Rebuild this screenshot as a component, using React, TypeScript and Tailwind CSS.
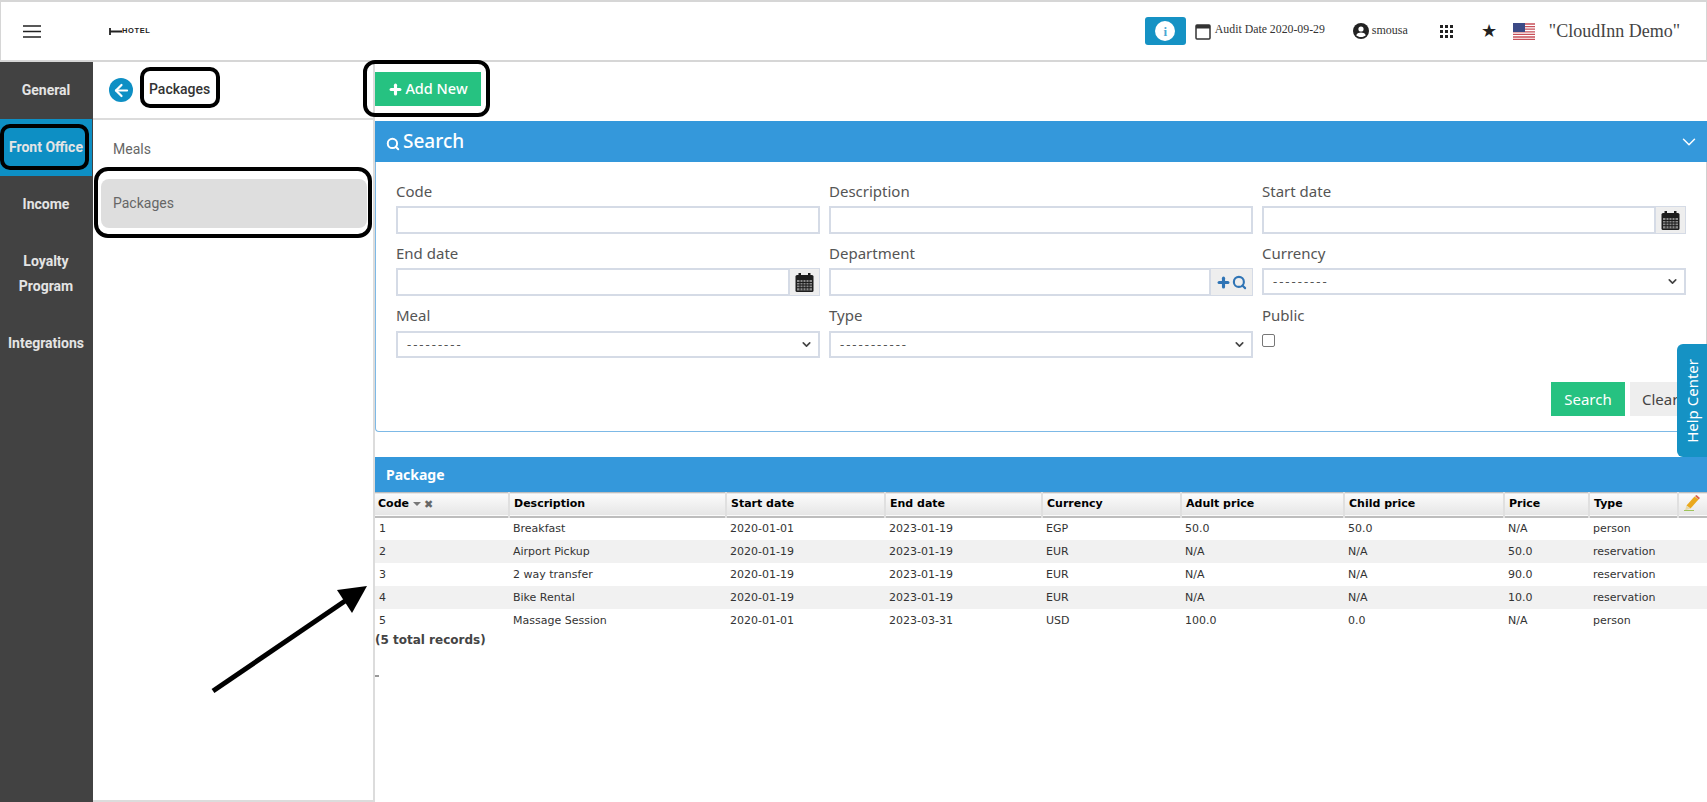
import { Info, Plus, Search, ChevronDown, ArrowLeft } from "lucide-react";

const sideItems = [
  { label: "General", cls: "h-[57px]" },
  { label: "Front Office", cls: "h-[57px] bg-[#0d8fc4]" },
  { label: "Income", cls: "h-[57px]" },
  { label: "Loyalty Program", cls: "h-[82px] px-3" },
  { label: "Integrations", cls: "h-[56px]" },
];

const columns = [
  { label: "Description", w: "w-[217px]" },
  { label: "Start date", w: "w-[159px]" },
  { label: "End date", w: "w-[157px]" },
  { label: "Currency", w: "w-[139px]" },
  { label: "Adult price", w: "w-[163px]" },
  { label: "Child price", w: "w-[160px]" },
  { label: "Price", w: "w-[85px]" },
  { label: "Type", w: "w-[89px]" },
];

const rows = [
  ["1", "Breakfast", "2020-01-01", "2023-01-19", "EGP", "50.0", "50.0", "N/A", "person"],
  ["2", "Airport Pickup", "2020-01-19", "2023-01-19", "EUR", "N/A", "N/A", "50.0", "reservation"],
  ["3", "2 way transfer", "2020-01-19", "2023-01-19", "EUR", "N/A", "N/A", "90.0", "reservation"],
  ["4", "Bike Rental", "2020-01-19", "2023-01-19", "EUR", "N/A", "N/A", "10.0", "reservation"],
  ["5", "Massage Session", "2020-01-01", "2023-03-31", "USD", "100.0", "0.0", "N/A", "person"],
];

function CalendarSolid() {
  return (
    <svg width="19" height="19" viewBox="0 0 18 19">
      <rect x="0" y="2" width="18" height="17" rx="1.5" fill="#1d1d1d" />
      <rect x="3" y="0" width="2.5" height="4" fill="#1d1d1d" />
      <rect x="12.5" y="0" width="2.5" height="4" fill="#1d1d1d" />
      <rect x="1.5" y="7" width="15" height="10.5" fill="#8a8a8a" />
      <path d="M1.5 9.5h15M1.5 12h15M1.5 14.7h15M4.5 7v10.5M7.5 7v10.5M10.5 7v10.5M13.5 7v10.5" stroke="#1d1d1d" strokeWidth="1" />
    </svg>
  );
}

function UsFlag() {
  return (
    <svg width="22" height="17" viewBox="0 0 22 17">
      <rect width="22" height="17" fill="#fff" />
      <path d="M0 1h22M0 3.6h22M0 6.2h22M0 8.8h22M0 11.4h22M0 14h22M0 16.3h22" stroke="#c8505a" strokeWidth="1.3" />
      <rect width="12" height="9" fill="#3c4a86" />
    </svg>
  );
}

function Pencil() {
  return (
    <svg width="16" height="16" viewBox="0 0 16 16">
      <path d="M10.5 1.5l4 3-8 9-4-3z" fill="#eaa81c" />
      <path d="M11 1l1.5-1 3.5 3-1.5 1.5z" fill="#d9634c" />
      <path d="M2.5 10.5l4 3-5.5 2z" fill="#e8d9a8" />
      <path d="M0 15.5h10" stroke="#9fc45a" strokeWidth="1" />
    </svg>
  );
}

function Field({ label, children }: { label: string; children: React.ReactNode }) {
  return (
    <div className="h-[62px]">
      <div className="h-[24px] text-[15px] leading-[18px] text-[#555] font-['Noto_Sans',sans-serif]">{label}</div>
      {children}
    </div>
  );
}

function TextInput() {
  return <div className="h-[28px] border-2 border-[#d5dbe6] bg-white" />;
}

function AddonInput({ children }: { children: React.ReactNode }) {
  return (
    <div className="h-[28px] flex border-2 border-[#d5dbe6] bg-white">
      <div className="flex-1" />
      <div className="w-[31px] -my-[1px] -mr-[1px] border-l-2 border-[#d5dbe6] bg-[#eeeeee] flex items-center justify-center">{children}</div>
    </div>
  );
}

function SelectBox({ value, top }: { value: string; top?: boolean }) {
  return (
    <div className={`${top ? "mt-[1px]" : ""} h-[27px] flex items-center justify-between border-2 border-[#d5dbe6] bg-white pl-[9px] pr-[5px] text-[13px] tracking-[2px] text-[#555] font-['Noto_Sans',sans-serif]`}>
      <span>{value}</span>
      <ChevronDown size={13} strokeWidth={3} color="#444" />
    </div>
  );
}

export default function App() {
  return (
    <div className="relative w-[1707px] h-[802px] overflow-hidden bg-white flex flex-col font-['Roboto',sans-serif]">
      {/* Top bar */}
      <header className="h-[62px] shrink-0 flex items-center border-t-2 border-l border-r border-b-2 border-[#d6d6d6] bg-white">
        <svg width="18" height="13" viewBox="0 0 18 13" className="ml-[22px]">
          <path d="M0 1h18M0 6.5h18M0 12h18" stroke="#222" strokeWidth="1.6" />
        </svg>
        <div className="ml-[68px] flex items-center text-[#222]">
          <svg width="13" height="7" viewBox="0 0 13 7">
            <path d="M1 0v7M1 3.5h12" stroke="#222" strokeWidth="1.8" />
          </svg>
          <span className="text-[7.5px] font-bold tracking-[0.6px] font-['Liberation_Sans',sans-serif]">HOTEL</span>
        </div>
        <div className="ml-auto flex items-center font-['Liberation_Serif',serif] text-[#333]">
          <div className="w-[41px] h-[28px] rounded-[3px] bg-[#1592c4] flex items-center justify-center">
            <div className="w-[20px] h-[20px] rounded-full bg-white flex items-center justify-center">
              <Info size={20} color="#1592c4" className="fill-white" strokeWidth={0} />
              <span className="absolute text-[13px] font-bold leading-none text-[#4aa8d4] font-['Liberation_Serif',serif]">i</span>
            </div>
          </div>
          <svg width="16" height="17" viewBox="0 0 16 17" className="ml-[9px]">
            <rect x="1" y="2" width="14" height="14" rx="1" fill="none" stroke="#333" strokeWidth="1.5" />
            <rect x="1" y="2" width="14" height="3.5" fill="#333" />
          </svg>
          <span className="ml-[4px] text-[11.8px] w-[138px] -mt-[3px]">Audit Date 2020-09-29</span>
          <svg width="16" height="16" viewBox="0 0 16 16">
            <circle cx="8" cy="8" r="8" fill="#222" />
            <circle cx="8" cy="6" r="2.6" fill="#fff" />
            <path d="M3.2 12.2c1-2 3-2.6 4.8-2.6s3.8.6 4.8 2.6c-1.2 1.2-2.9 1.8-4.8 1.8s-3.6-.6-4.8-1.8z" fill="#fff" />
          </svg>
          <span className="ml-[3px] text-[12px] w-[68px] -mt-[3px]">smousa</span>
          <svg width="13" height="13" viewBox="0 0 13 13" fill="#222">
            <rect x="0" y="0" width="3" height="3" /><rect x="5" y="0" width="3" height="3" /><rect x="10" y="0" width="3" height="3" />
            <rect x="0" y="5" width="3" height="3" /><rect x="5" y="5" width="3" height="3" /><rect x="10" y="5" width="3" height="3" />
            <rect x="0" y="10" width="3" height="3" /><rect x="5" y="10" width="3" height="3" /><rect x="10" y="10" width="3" height="3" />
          </svg>
          <span className="ml-[28px] text-[18px] leading-none text-[#222]">★</span>
          <span className="ml-[16px] flex"><UsFlag /></span>
          <span className="ml-[14px] mr-[26px] text-[18px] text-[#444] whitespace-nowrap">"CloudInn Demo"</span>
        </div>
      </header>

      <div className="flex flex-1 min-h-0">
        {/* Module rail */}
        <nav className="w-[93px] shrink-0 bg-[#424242] pr-[1px]">
          {sideItems.map((item) => (
            <div
              key={item.label}
              className={`${item.cls} flex items-center justify-center text-center text-[14px] leading-[25px] font-bold text-[#e4e4e4]`}
            >
              {item.label}
            </div>
          ))}
        </nav>

        {/* Sub menu */}
        <aside className="w-[282px] shrink-0 border-r-2 border-b-2 border-[#dcdcdc]">
          <div className="h-[58px] flex items-center pl-[16px] border-b-2 border-[#dcdcdc]">
            <div className="w-[24px] h-[24px] rounded-full bg-[#0d8fc4] flex items-center justify-center">
              <ArrowLeft size={19} strokeWidth={2.8} color="#fff" />
            </div>
            <span className="ml-[16px] -mt-[1px] text-[14px] font-medium text-[#333]">Packages</span>
          </div>
          <div className="pt-[10px] pl-[8px] pr-[6px] text-[14px] text-[#666]">
            <div className="h-[38px] flex items-center pl-[12px]">Meals</div>
            <div className="mt-[11px] h-[49px] rounded-lg bg-[#dedede] flex items-center pl-[12px]">Packages</div>
          </div>
        </aside>

        {/* Main */}
        <main className="flex-1 min-w-0 pt-[10px]">
          <button className="w-[106px] h-[34px] bg-[#26c281] text-white text-[14.5px] font-medium flex items-center justify-center gap-[2px] font-['Noto_Sans',sans-serif]">
            <Plus size={15} strokeWidth={5} />
            <span className="-mt-[1px]">Add New</span>
          </button>

          <section className="mt-[15px]">
            <div className="h-[41px] bg-[#3498db] text-white flex items-center pl-[11px]">
              <Search size={14} strokeWidth={3.4} className="mt-[4px]" />
              <span className="ml-[3px] -mt-[1px] text-[19px] font-medium font-['Noto_Sans',sans-serif]">Search</span>
              <ChevronDown size={22} strokeWidth={1.6} className="ml-auto mr-[7px]" />
            </div>
            <div className="h-[270px] border-l border-r border-b border-l-[#7db9e6] border-b-[#7db9e6] border-r-[#d0d0d0] rounded-bl-sm pl-[20px]">
              <div className="pt-[20px] grid grid-cols-[424px_424px_424px] gap-x-[9px]">
                <Field label="Code"><TextInput /></Field>
                <Field label="Description"><TextInput /></Field>
                <Field label="Start date"><AddonInput><CalendarSolid /></AddonInput></Field>
                <Field label="End date"><AddonInput><CalendarSolid /></AddonInput></Field>
                <Field label="Department">
                  <div className="h-[28px] flex border-2 border-[#d5dbe6] bg-white">
                    <div className="flex-1" />
                    <div className="w-[43px] -my-[1px] -mr-[1px] border-l-2 border-[#d5dbe6] bg-[#eeeeee] flex items-center justify-center gap-[1px]">
                      <Plus size={15} strokeWidth={5} color="#2f74b5" />
                      <Search size={15} strokeWidth={3.4} color="#2f74b5" />
                    </div>
                  </div>
                </Field>
                <Field label="Currency"><SelectBox value="---------" /></Field>
                <Field label="Meal"><SelectBox value="---------" top /></Field>
                <Field label="Type"><SelectBox value="-----------" top /></Field>
                <Field label="Public">
                  <div className="mt-[4px] w-[13px] h-[13px] rounded-[2px] border border-[#777] bg-white" />
                </Field>
              </div>
              <div className="mt-[14px] flex justify-end gap-[5px] pr-[16px] text-[15px] font-['Noto_Sans',sans-serif]">
                <div className="w-[74px] h-[34px] bg-[#26c281] text-white flex items-center justify-center">Search</div>
                <div className="w-[60px] h-[34px] bg-[#eeeeee] text-[#444] flex items-center pl-[12px]">Clear</div>
              </div>
            </div>
          </section>

          <section className="mt-[25px] font-['DejaVu_Sans',sans-serif]">
            <div className="h-[35px] bg-[#3498db] text-white flex items-center pl-[11px] text-[14px] font-bold font-['Noto_Sans',sans-serif]">
              <span className="-mt-[1px]">Package</span>
            </div>
            <table className="w-full table-fixed border-collapse text-[11px] text-[#333]">
              <thead>
                <tr className="h-[24px] bg-gradient-to-b from-[#fbfbfb] to-[#e6e6e6] border-t border-b-2 border-[#bdbdbd] text-black">
                  <th className="w-[134px] px-[3px] text-left font-bold border-r-2 border-[#e0e0e0]">
                    <span className="inline-flex items-center gap-[4px]">
                      Code
                      <span className="w-0 h-0 border-l-[4px] border-r-[4px] border-t-[4px] border-l-transparent border-r-transparent border-t-[#777]" />
                      <span className="-ml-[1px] text-[#666] text-[11px] leading-none">✖</span>
                    </span>
                  </th>
                  {columns.map((col) => (
                    <th key={col.label} className={`${col.w} px-[4px] text-left font-bold border-r-2 border-[#e0e0e0]`}>
                      {col.label}
                    </th>
                  ))}
                  <th className="pl-[5px] pb-[2px]">
                    <span className="flex"><Pencil /></span>
                  </th>
                </tr>
              </thead>
              <tbody>
                {rows.map((row, i) => (
                  <tr key={row[0]} className={`h-[23px] ${i % 2 === 1 ? "bg-[#f1f1f1]" : "bg-white"}`}>
                    {row.map((cell, j) => (
                      <td key={j} className="px-[4px] pt-[2px] whitespace-nowrap">{cell}</td>
                    ))}
                    <td />
                  </tr>
                ))}
              </tbody>
            </table>
            <div className="text-[12px] font-bold leading-[16px] text-[#444]">(5 total records)</div>
            <div className="mt-[27px] w-[4px] h-[2px] bg-[#999]" />
          </section>
        </main>
      </div>

      {/* Help tab */}
      <div className="absolute right-0 top-[344px] w-[30px] h-[113px] rounded-tl-md rounded-bl-md bg-[#1592c4] text-white text-[15px] flex items-center justify-center font-['Noto_Sans',sans-serif]">
        <span className="[writing-mode:vertical-rl] rotate-180 whitespace-nowrap">Help Center</span>
      </div>

      {/* Annotation marks drawn over the screenshot */}
      <div className="absolute left-[140px] top-[67px] w-[80px] h-[41px] border-4 border-black rounded-[10px]" />
      <div className="absolute left-[363px] top-[60px] w-[127px] h-[57px] border-4 border-black rounded-[12px]" />
      <div className="absolute left-0 top-[124px] w-[89px] h-[46px] border-4 border-black rounded-[10px]" />
      <div className="absolute left-[94px] top-[167px] w-[278px] h-[71px] border-4 border-black rounded-[14px]" />
      <svg width="180" height="120" viewBox="0 0 180 120" className="absolute left-[200px] top-[580px]">
        <path d="M13 111L145 21" stroke="#000" strokeWidth="5" />
        <path d="M167 6L137 10L152 33z" fill="#000" />
      </svg>
    </div>
  );
}
